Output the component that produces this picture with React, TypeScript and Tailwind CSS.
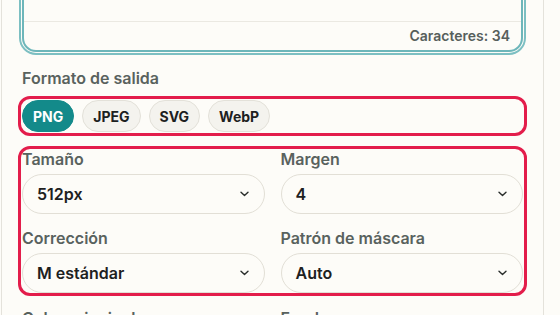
import { useState } from "react";

type SelectField = {
  key: string;
  label: string;
  value: string;
  options: string[];
};

const formats = ["PNG", "JPEG", "SVG", "WebP"];

const selectFields: SelectField[] = [
  { key: "size", label: "Tamaño", value: "512px", options: ["256px", "512px", "1024px"] },
  { key: "margin", label: "Margen", value: "4", options: ["0", "2", "4", "8"] },
  { key: "ecc", label: "Corrección", value: "M estándar", options: ["L bajo", "M estándar", "Q alto", "H máximo"] },
  { key: "mask", label: "Patrón de máscara", value: "Auto", options: ["Auto", "0", "1", "2"] },
];

function Chevron() {
  return (
    <svg width="9" height="6" viewBox="0 0 9 6" fill="none" className="shrink-0">
      <path d="M1 1.2l3.5 3.4L8 1.2" stroke="#2a2e2c" strokeWidth="1.4" strokeLinecap="round" strokeLinejoin="round" />
    </svg>
  );
}

export default function App() {
  const [format, setFormat] = useState("PNG");
  const [text, setText] = useState("https://ejemplo.com/mi-codigo-qr-1");

  return (
    <div
      className="min-h-[315px] overflow-hidden bg-[#fdfcf8] pl-px text-[#1d211f]"
      style={{ fontFamily: "Inter, 'Liberation Sans', sans-serif" }}
    >
      <div className="w-[543px] border-x border-[#e4e2db] px-5 pb-6">
        {/* text input, scrolled mostly out of view */}
        <div className="-mt-[81px] rounded-[14px] border-2 border-[#6db6ba] bg-[#fdfcf8] shadow-[0_0_0_1px_#fdfcf8,0_0_0_3px_#7cbfc2]">
          <textarea
            value={text}
            onChange={(e) => setText(e.target.value)}
            className="block h-[100px] w-full resize-none bg-transparent px-3 py-3 text-[15px] text-transparent outline-none"
          />
          <div className="flex justify-end border-t border-[#ebe9e2] px-[11px] py-1 text-[14px] leading-5 font-semibold text-[#575f5c]">
            Caracteres: 34
          </div>
        </div>

        <div className="mt-4 text-[16px] leading-5 font-semibold text-[#59625e]">
          Formato de salida
        </div>
        <div className="-mx-1 mt-2 flex gap-2 rounded-[12px] border-[3px] border-[#e31d4b] px-px py-px">
          {formats.map((f) => (
            <button
              key={f}
              onClick={() => setFormat(f)}
              className={
                f === format
                  ? "h-8 rounded-full border border-[#138a8a] bg-[#138a8a] px-[10px] text-[14px] font-bold text-white"
                  : "h-8 rounded-full border border-[#e3e1d9] bg-[#f4f3ee] px-[10px] text-[14px] font-bold text-[#1d211f]"
              }
            >
              {f}
            </button>
          ))}
        </div>

        <div className="-mx-1 mt-[10px] grid grid-cols-2 gap-x-4 gap-y-[14px] rounded-[12px] border-[3px] border-[#e31d4b] px-px">
          {selectFields.map((field) => (
            <div key={field.key}>
              <div className="mb-[5px] text-[16px] leading-5 font-semibold text-[#59625e]">
                {field.label}
              </div>
              <div className="flex h-10 items-center justify-between rounded-full border border-[#e2dfd6] bg-[#fdfcf8] pr-[15px] pl-[14px]">
                <span className="text-[16px] font-semibold text-[#1d211f]">{field.value}</span>
                <Chevron />
              </div>
            </div>
          ))}
        </div>

        <div className="mt-3 grid grid-cols-2 gap-x-4">
          <div className="text-[16px] leading-5 font-semibold text-[#59625e]">Color principal</div>
          <div className="text-[16px] leading-5 font-semibold text-[#59625e]">Fondo</div>
        </div>
      </div>
    </div>
  );
}
